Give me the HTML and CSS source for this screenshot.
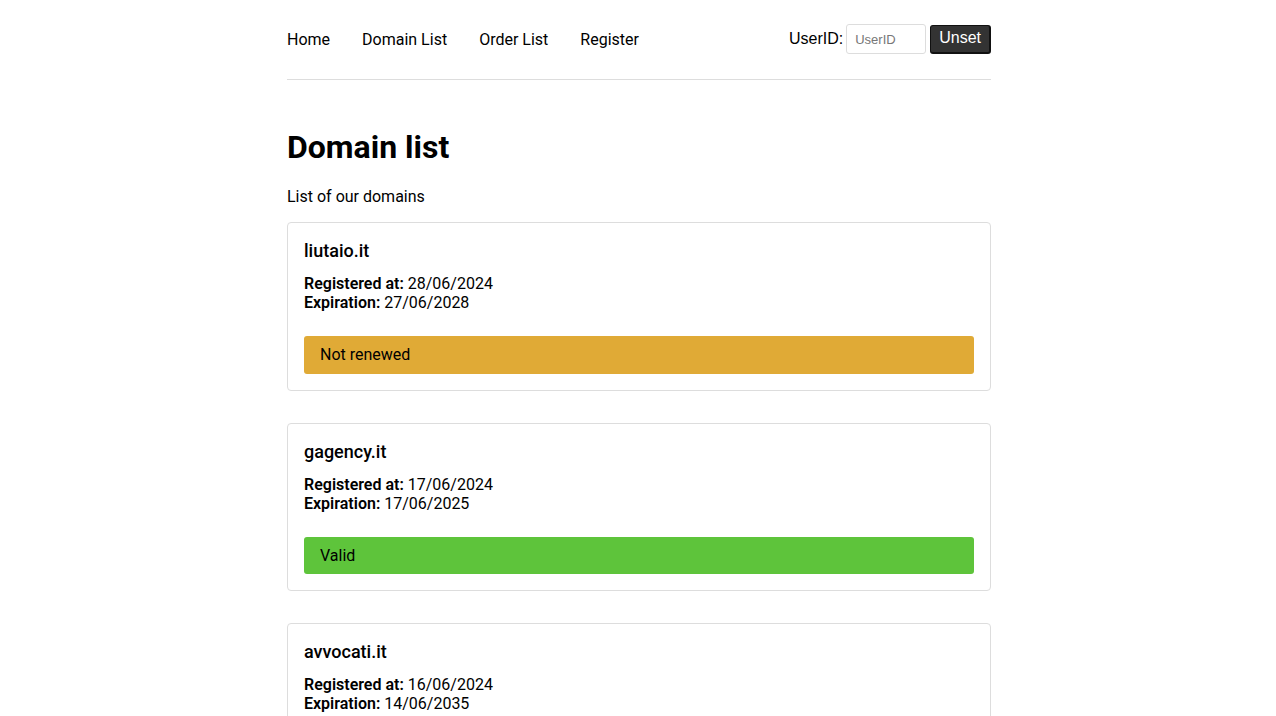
FILE: index.html
```html
<!DOCTYPE html>
<html lang="en">
<head>
<meta charset="utf-8">
<title>Domain list</title>
<link rel="stylesheet" href="styles.css">
</head>
<body>
<div class="container">
  <header class="header">
    <nav class="nav">
      <a href="#">Home</a>
      <a href="#">Domain List</a>
      <a href="#">Order List</a>
      <a href="#">Register</a>
    </nav>
    <div class="user">
      <label for="uid">UserID:</label>
      <input id="uid" type="text" placeholder="UserID">
      <button type="button">Unset</button>
    </div>
  </header>
  <main>
    <h1>Domain list</h1>
    <p class="lead">List of our domains</p>
    <div class="cards">
      <div class="card">
        <h3>liutaio.it</h3>
        <div class="dates">
          <div><b>Registered at:</b> 28/06/2024</div>
          <div><b>Expiration:</b> 27/06/2028</div>
        </div>
        <div class="status warn">Not renewed</div>
      </div>
      <div class="card">
        <h3>gagency.it</h3>
        <div class="dates">
          <div><b>Registered at:</b> 17/06/2024</div>
          <div><b>Expiration:</b> 17/06/2025</div>
        </div>
        <div class="status ok">Valid</div>
      </div>
      <div class="card">
        <h3>avvocati.it</h3>
        <div class="dates">
          <div><b>Registered at:</b> 16/06/2024</div>
          <div><b>Expiration:</b> 14/06/2035</div>
        </div>
        <div class="status ok">Valid</div>
      </div>
    </div>
  </main>
</div>
</body>
</html>
```
FILE: styles.css
```css
html, body {
  margin: 0;
  padding: 0;
  background: #fff;
}
body {
  padding-left: 2px;
  font-family: Roboto, "Liberation Sans", sans-serif;
  font-size: 16px;
  color: #000;
}
.container {
  width: 704px;
  margin: 0 auto;
}
.header {
  display: flex;
  align-items: center;
  justify-content: space-between;
  padding: 24px 0 25px;
  height: 30px;
  border-bottom: 1px solid #ddd;
}
.nav {
  display: flex;
  gap: 32px;
}
.nav a {
  color: #000;
  text-decoration: none;
  font-size: 16px;
}
.user {
  display: flex;
  align-items: center;
  font-family: "Liberation Sans", Arial, sans-serif;
  font-size: 16px;
}
.user label {
  margin-right: 3px;
}
.user input {
  box-sizing: border-box;
  width: 80px;
  height: 30px;
  border: 1px solid #ddd;
  border-radius: 3px;
  padding: 0 8px;
  font-family: "Liberation Sans", Arial, sans-serif;
  font-size: 13px;
  color: #333;
}
.user input::placeholder {
  color: #777;
}
.user button {
  box-sizing: border-box;
  margin-left: 4px;
  height: 29px;
  padding: 0 8px 1px;
  background: #333;
  color: #fff;
  border: 1px solid #111;
  border-right-width: 2px;
  border-bottom-width: 2px;
  border-radius: 3px;
  font-family: "Liberation Sans", Arial, sans-serif;
  font-size: 16px;
  line-height: 1;
}
h1 {
  font-size: 32px;
  font-weight: 700;
  line-height: 38px;
  margin: 48px 0 0;
}
.lead {
  margin: 21px 0 16px;
  line-height: 19px;
}
.cards {
  display: flex;
  flex-direction: column;
  gap: 32px;
}
.card {
  border: 1px solid #ddd;
  border-radius: 4px;
  padding: 16px;
}
.card h3 {
  margin: 0;
  font-size: 18px;
  font-weight: 500;
  line-height: 24px;
}
.dates {
  margin-top: 11px;
  line-height: 19px;
}
.dates b {
  font-weight: 600;
}
.status {
  margin-top: 24px;
  height: 37.5px;
  line-height: 37.5px;
  padding: 0 16px;
  border-radius: 3px;
}
.warn {
  background: #e0aa36;
}
.ok {
  background: #5ec43b;
}
```
